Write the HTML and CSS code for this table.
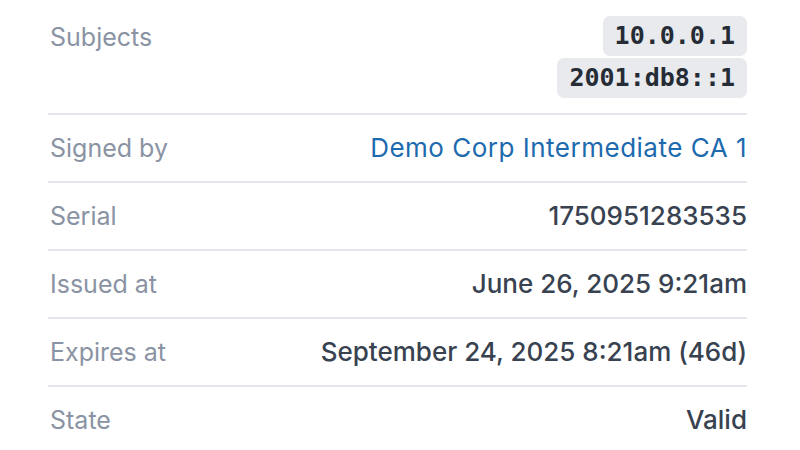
FILE: index.html
```html
<!DOCTYPE html>
<html lang="en">
<head>
<meta charset="utf-8">
<title>Certificate details</title>
<link rel="stylesheet" href="styles.css">
</head>
<body>
<dl class="details">
  <div class="row first">
    <dt class="label">Subjects</dt>
    <dd class="value chips">
      <code class="chip">10.0.0.1</code>
      <code class="chip">2001:db8::1</code>
    </dd>
  </div>
  <div class="row">
    <dt class="label">Signed by</dt>
    <dd class="value"><a class="link" href="#">Demo Corp Intermediate CA 1</a></dd>
  </div>
  <div class="row">
    <dt class="label">Serial</dt>
    <dd class="value">1750951283535</dd>
  </div>
  <div class="row">
    <dt class="label">Issued at</dt>
    <dd class="value">June 26, 2025 9:21am</dd>
  </div>
  <div class="row">
    <dt class="label">Expires at</dt>
    <dd class="value">September 24, 2025 8:21am (46d)</dd>
  </div>
  <div class="row last">
    <dt class="label">State</dt>
    <dd class="value">Valid</dd>
  </div>
</dl>
</body>
</html>
```
FILE: styles.css
```css
html, body {
  margin: 0;
  padding: 0;
  background: #ffffff;
}
body {
  font-family: Inter, "Noto Sans", sans-serif;
  font-size: 25px;
  line-height: 34px;
}
.details {
  margin: 0;
  padding: 0 53px 0 48px;
}
.row {
  display: flex;
  justify-content: space-between;
  align-items: flex-start;
  padding: 16px 0;
  border-bottom: 2px solid #e3e6ea;
}
.row.first {
  padding-bottom: 15px;
}
.row.first .label {
  padding-top: 4px;
}
.row.last {
  border-bottom: none;
}
.label {
  margin: 0;
  padding-left: 2px;
  color: #8a93a3;
  font-weight: 400;
}
.value {
  margin: 0;
  color: #384250;
  font-size: 26px;
  font-weight: 500;
  text-align: right;
}
.link {
  color: #1d6aae;
  text-decoration: none;
  font-weight: 400;
  letter-spacing: 0.5px;
}
.chips {
  display: flex;
  flex-direction: column;
  align-items: flex-end;
  gap: 2px;
}
.chip {
  display: block;
  font-family: "DejaVu Sans Mono", monospace;
  font-size: 25px;
  font-weight: bold;
  line-height: 40px;
  padding: 0 12px;
  background: #e8eaee;
  border-radius: 7px;
  color: #262c35;
}
```
